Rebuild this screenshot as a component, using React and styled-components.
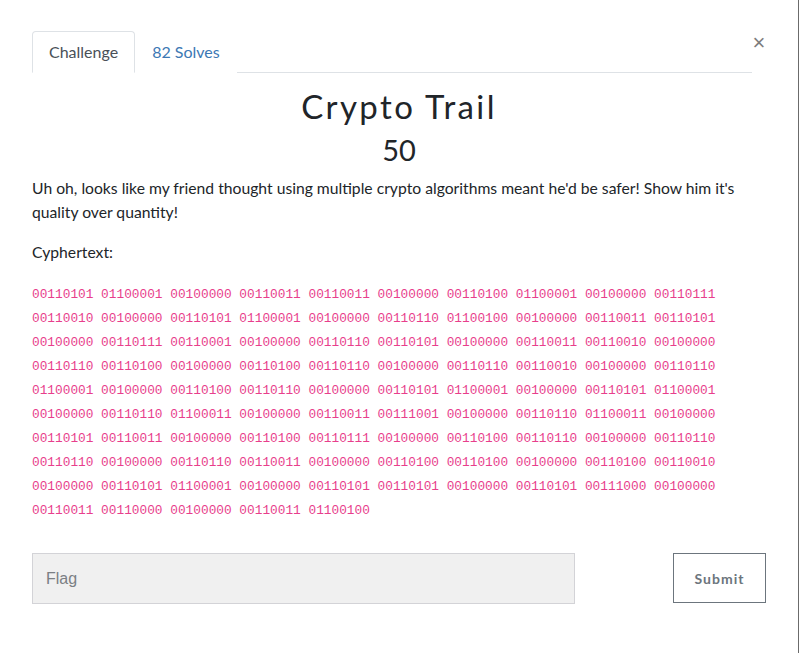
import React from 'react'
import styled, { createGlobalStyle } from 'styled-components'

const GlobalStyle = createGlobalStyle`
  html, body {
    margin: 0;
    padding: 0;
    background: #fff;
  }
  body {
    font-family: Lato, "Noto Sans", sans-serif;
    color: #212529;
  }
`

const Modal = styled.div`
  box-sizing: border-box;
  width: 799px;
  min-height: 653px;
  padding: 31px 32px 0 32px;
  border-right: 1px solid #6b6b6b;
`

const Header = styled.div`
  display: flex;
  align-items: flex-start;
`

const TabList = styled.div`
  flex: 1;
  display: flex;
  border-bottom: 1px solid #dee2e6;
`

const Tab = styled.div`
  box-sizing: border-box;
  height: 42px;
  padding: 0 16px 1px;
  display: flex;
  align-items: center;
  font-size: 16px;
  margin-bottom: -1px;
  border: 1px solid ${p => (p.$active ? '#dee2e6' : 'transparent')};
  border-bottom-color: ${p => (p.$active ? '#fff' : 'transparent')};
  border-radius: 4px 4px 0 0;
  background: #fff;
  color: ${p => (p.$active ? '#495057' : '#3c78b4')};
`

const Close = styled.div`
  width: 14px;
  padding-top: 1px;
  text-align: center;
  font-family: "Liberation Sans", Arial, sans-serif;
  font-size: 22px;
  line-height: 22px;
  color: #7d7d7d;
`

const Title = styled.h1`
  margin: 13px 0 0;
  text-align: center;
  font-family: Lato, sans-serif;
  font-weight: 400;
  font-size: 33px;
  line-height: 40px;
  letter-spacing: 2.4px;
  color: #212529;
`

const Points = styled.h2`
  margin: 6px 0 0;
  text-align: center;
  font-weight: 400;
  font-size: 29px;
  line-height: 36px;
`

const Text = styled.p`
  margin: 0 0 16px;
  font-size: 15.7px;
  line-height: 24px;
`

const Description = styled.div`
  margin-top: 8px;
`

const Cipher = styled.code`
  display: block;
  margin-top: 19px;
  font-family: "Liberation Mono", "DejaVu Sans Mono", monospace;
  font-size: 12.8px;
  line-height: 24px;
  color: #e83e8c;
  word-wrap: break-word;
`

const Form = styled.div`
  display: flex;
  justify-content: space-between;
  align-items: flex-start;
  margin-top: 30px;
`

const FlagInput = styled.input`
  box-sizing: border-box;
  width: 543px;
  height: 51px;
  padding: 0 13px;
  border: 1px solid #d3d3d7;
  background: #f0f0f0;
  font-family: "Liberation Sans", Arial, sans-serif;
  font-size: 16px;
  color: #495057;
  outline: none;

  &::placeholder {
    color: #7b7f84;
  }
`

const SubmitButton = styled.button`
  box-sizing: border-box;
  width: 93px;
  height: 50px;
  border: 1px solid #6c757d;
  border-radius: 0;
  background: #fff;
  font-family: Lato, sans-serif;
  font-weight: 700;
  font-size: 14px;
  letter-spacing: 1px;
  color: #6c757d;
`

const cipherText =
  '00110101 01100001 00100000 00110011 00110011 00100000 00110100 01100001 00100000 00110111 ' +
  '00110010 00100000 00110101 01100001 00100000 00110110 01100100 00100000 00110011 00110101 ' +
  '00100000 00110111 00110001 00100000 00110110 00110101 00100000 00110011 00110010 00100000 ' +
  '00110110 00110100 00100000 00110100 00110110 00100000 00110110 00110010 00100000 00110110 ' +
  '01100001 00100000 00110100 00110110 00100000 00110101 01100001 00100000 00110101 01100001 ' +
  '00100000 00110110 01100011 00100000 00110011 00111001 00100000 00110110 01100011 00100000 ' +
  '00110101 00110011 00100000 00110100 00110111 00100000 00110100 00110110 00100000 00110110 ' +
  '00110110 00100000 00110110 00110011 00100000 00110100 00110100 00100000 00110100 00110010 ' +
  '00100000 00110101 01100001 00100000 00110101 00110101 00100000 00110101 00111000 00100000 ' +
  '00110011 00110000 00100000 00110011 01100100'

export default function App () {
  return (
    <>
      <GlobalStyle />
      <Modal>
        <Header>
          <TabList>
            <Tab $active>Challenge</Tab>
            <Tab>82 Solves</Tab>
          </TabList>
          <Close>×</Close>
        </Header>

        <Title>Crypto Trail</Title>
        <Points>50</Points>

        <Description>
          <Text>
            Uh oh, looks like my friend thought using multiple crypto algorithms meant he'd be safer! Show him it's quality over quantity!
          </Text>
          <Text>Cyphertext:</Text>
          <Cipher>{cipherText}</Cipher>
        </Description>

        <Form>
          <FlagInput placeholder='Flag' />
          <SubmitButton>Submit</SubmitButton>
        </Form>
      </Modal>
    </>
  )
}
